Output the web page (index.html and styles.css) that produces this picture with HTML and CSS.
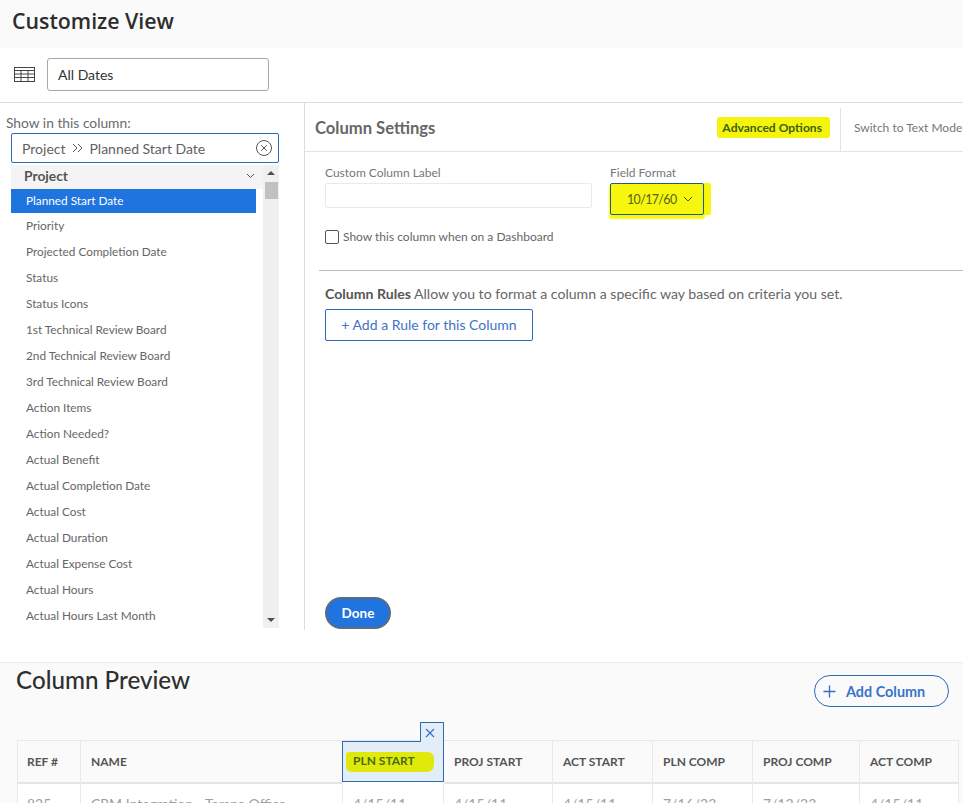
FILE: index.html
```html
<!DOCTYPE html>
<html lang="en">
<head>
<meta charset="utf-8">
<title>Customize View</title>
<link rel="stylesheet" href="styles.css">
</head>
<body>
<header class="page-head"><h1>Customize View</h1></header>
<section class="toolbar">
  <svg class="grid-icon" width="21" height="15" viewBox="0 0 21 15" fill="none" stroke="#444" stroke-width="1"><rect x="0.5" y="0.5" width="20" height="14"/><path d="M0.5 3.5h20M0.5 7h20M0.5 10.500h20M7 3.500v11M14 3.500v11"/></svg>
  <div class="view-name">All Dates</div>
</section>
<main class="editor">
  <aside class="picker">
    <div class="picker-label">Show in this column:</div>
    <div class="picker-input">
      <span>Project</span>
      <svg class="crumb" width="12" height="10" viewBox="0 0 12 10" fill="none" stroke="#555" stroke-width="1"><path d="M1 1l4 4-4 4M6 1l4 4-4 4"/></svg>
      <span>Planned Start Date</span>
      <svg class="clear" width="16" height="16" viewBox="0 0 16 16" fill="none" stroke="#555" stroke-width="1"><circle cx="8" cy="8" r="7.5"/><path d="M5.200 5.200l5.600 5.600M10.800 5.200l-5.600 5.600"/></svg>
    </div>
    <div class="picker-list">
      <div class="list-col">
        <div class="group">Project<svg width="9" height="6" viewBox="0 0 9 6" fill="none" stroke="#555" stroke-width="1"><path d="M1 1l3.500 3.500L8 1"/></svg></div>
        <div class="item selected">Planned Start Date</div>
        <div class="item">Priority</div>
        <div class="item">Projected Completion Date</div>
        <div class="item">Status</div>
        <div class="item">Status Icons</div>
        <div class="item">1st Technical Review Board</div>
        <div class="item">2nd Technical Review Board</div>
        <div class="item">3rd Technical Review Board</div>
        <div class="item">Action Items</div>
        <div class="item">Action Needed?</div>
        <div class="item">Actual Benefit</div>
        <div class="item">Actual Completion Date</div>
        <div class="item">Actual Cost</div>
        <div class="item">Actual Duration</div>
        <div class="item">Actual Expense Cost</div>
        <div class="item">Actual Hours</div>
        <div class="item">Actual Hours Last Month</div>
      </div>
      <div class="scrollbar">
        <i class="arrow up"></i>
        <i class="thumb"></i>
        <i class="arrow down"></i>
      </div>
    </div>
  </aside>
  <section class="settings">
    <div class="settings-head">
      <h2>Column Settings</h2>
      <div class="advanced"><span class="marker">Advanced Options</span></div>
      <div class="switch">Switch to Text Mode</div>
    </div>
    <div class="form-row">
      <div class="field">
        <label class="field-label">Custom Column Label</label>
        <div class="text-input"></div>
      </div>
      <div class="field">
        <label class="field-label">Field Format</label>
        <div class="format-select">10/17/60<svg width="10" height="6" viewBox="0 0 10 6" fill="none" stroke="#4d5a10" stroke-width="1"><path d="M1 1l4 4 4-4"/></svg></div>
      </div>
    </div>
    <div class="check-row"><span class="checkbox"></span><span>Show this column when on a Dashboard</span></div>
    <hr class="rule">
    <p class="rules-text"><b>Column Rules</b> Allow you to format a column a specific way based on criteria you set.</p>
    <div class="add-rule">+ Add a Rule for this Column</div>
    <div class="done">Done</div>
  </section>
</main>
<section class="preview">
  <div class="preview-head">
    <h2>Column Preview</h2>
    <div class="add-col"><svg width="13" height="13" viewBox="0 0 13 13" fill="none" stroke="#2f6fd0" stroke-width="1.300"><path d="M6.500 0.500v12M0.500 6.500h12"/></svg><span>Add Column</span></div>
  </div>
  <div class="table">
    <div class="cell head">REF #</div>
    <div class="cell head">NAME</div>
    <div class="cell head active">
      <span class="remove"><svg width="10" height="10" viewBox="0 0 10 10" fill="none" stroke="#2f6fd0" stroke-width="1.100"><path d="M1 1l8 8M9 1l-8 8"/></svg></span>
      <span class="marker-col">PLN START</span>
    </div>
    <div class="cell head">PROJ START</div>
    <div class="cell head">ACT START</div>
    <div class="cell head">PLN COMP</div>
    <div class="cell head">PROJ COMP</div>
    <div class="cell head">ACT COMP</div>
    <div class="cell">825</div>
    <div class="cell">CRM Integration - Tampa Office</div>
    <div class="cell">4/15/11</div>
    <div class="cell">4/15/11</div>
    <div class="cell">4/15/11</div>
    <div class="cell">7/16/23</div>
    <div class="cell">7/12/23</div>
    <div class="cell">4/15/11</div>
  </div>
</section>
</body>
</html>
```
FILE: styles.css
```css
* { box-sizing: border-box; }
html, body { margin: 0; height: 803px; overflow: hidden; }
body { background: #fff; color: #4a4a4a; font-family: "Lato", "Liberation Sans", sans-serif; font-size: 12px; width: 963px; }

.page-head { height: 48px; background: #fafafa; padding: 6px 0 0 12px; }
.page-head h1 { margin: 0; font: 600 21.3px/30px "Open Sans", sans-serif; color: #2d2d2d; }

.toolbar { height: 55px; display: flex; align-items: flex-start; padding: 10px 0 0 14px; border-bottom: 1px solid #ddd; }
.grid-icon { margin: 9px 12px 0 0; }
.view-name { width: 222px; height: 33px; border: 1px solid #a8a8a8; border-radius: 3px; padding: 0 10px; font-size: 14px; line-height: 32px; color: #333; }

.editor { display: flex; height: 527px; }
.picker { width: 305px; border-right: 1px solid #ddd; padding: 12px 25px 0 0; flex: none; }
.picker-label { font-size: 13.8px; line-height: 15px; color: #6b6b6b; padding-left: 6px; margin-bottom: 3px; }
.picker-input { margin: 0 0 2px 11px; height: 30px; border: 1px solid #2a6cb5; border-radius: 2px; display: flex; align-items: center; padding: 0 6px 0 10px; font-size: 14px; color: #5f5f5f; }
.crumb { margin: 0 5px 0 7px; }
.clear { margin-left: auto; }
.picker-list { display: flex; margin-left: 11px; height: 463px; overflow: hidden; }
.list-col { width: 245px; }
.group { height: 24px; background: #f4f4f4; display: flex; align-items: center; justify-content: space-between; padding: 0 8px 3px 13px; width: 252px; font-size: 13.8px; font-weight: 700; color: #555; }
.item { height: 26px; padding-left: 15px; line-height: 26px; font-size: 11.8px; color: #666; white-space: nowrap; }
.item.selected { height: 24px; line-height: 24px; background: #1f74e0; color: #fff; }
.scrollbar { width: 16px; margin-left: 7px; background: #f0f0f0; position: relative; flex: none; }
.thumb { position: absolute; top: 17px; left: 2px; width: 13px; height: 17px; background: #c1c1c1; }
.arrow { position: absolute; left: 4px; width: 0; height: 0; border-left: 4px solid transparent; border-right: 4px solid transparent; }
.arrow.up { top: 6px; border-bottom: 4px solid #505050; }
.arrow.down { bottom: 6px; border-top: 4px solid #505050; }

.settings { flex: 1; min-width: 0; position: relative; overflow: hidden; }
.settings-head { height: 49px; display: flex; align-items: center; border-bottom: 1px solid #e3e3e3; padding-left: 10px; }
.settings-head h2 { margin: 2px 0 0; font-size: 16.6px; font-weight: 700; color: #666; }
.advanced { margin-left: auto; display: flex; }
.marker { background: #f4f40e; color: #3f5f0a; font-size: 12.1px; font-weight: 700; padding: 3px 8px 3px 5px; border-radius: 3px; }
.switch { margin: 5px 0 0 10px; height: 44px; border-left: 1px solid #e3e3e3; padding: 12px 0 0 13px; font-size: 12px; color: #777; white-space: nowrap; width: 123px; flex: none; }

.form-row { display: flex; gap: 18px; padding: 13px 0 0 20px; }
.field-label { display: block; font-size: 12px; line-height: 16px; color: #777; margin-bottom: 2px; }
.text-input { width: 267px; height: 25px; border: 1px solid #eaeaea; border-radius: 2px; }
.format-select { width: 94px; height: 32px; background: #f6f60e; border: 1px solid #1e5a86; border-radius: 2px; box-shadow: 0 3px 2px 1px #f6f60e, 7px 0 0 #f6f60e; display: flex; align-items: center; padding-left: 16px; gap: 6px; font-size: 12.4px; letter-spacing: -0.6px; color: #55650f; }
.check-row { display: flex; align-items: center; gap: 4px; padding: 14px 0 0 20px; font-size: 12px; color: #666; }
.checkbox { width: 14px; height: 14px; border: 1px solid #555; border-radius: 2px; background: #fff; }
.rule { margin: 26px 0 0 14px; border: 0; border-top: 1px solid #bdbdbd; }
.rules-text { margin: 15px 0 0 20px; font-size: 14.1px; line-height: 16px; color: #666; white-space: nowrap; }
.rules-text b { color: #555; }
.add-rule { margin: 7px 0 0 20px; width: 208px; height: 32px; border: 1px solid #2a6cb5; border-radius: 2px; text-align: center; line-height: 30px; font-size: 14px; color: #3f73c4; }
.done { position: absolute; left: 20px; top: 494px; width: 66px; height: 32px; background: #1f74e0; border: 2px solid #5f6b7d; border-radius: 16px; color: #fff; font-size: 13.5px; font-weight: 700; text-align: center; line-height: 28px; }

.preview { margin-top: 32px; height: 141px; background: #fafafa; border-top: 1px solid #ececec; overflow: hidden; }
.preview-head { display: flex; justify-content: space-between; height: 77px; padding: 2px 14px 0 16px; }
.preview-head h2 { margin: 0; font-size: 24.2px; font-weight: 500; line-height: 30px; color: #2f2f2f; }
.add-col { margin-top: 10px; width: 135px; height: 32px; border: 1px solid #2a6cb5; border-radius: 16px; display: flex; align-items: center; padding-left: 8px; gap: 10px; color: #3a72cc; font-size: 14.4px; font-weight: 700; }

.table { display: grid; grid-template-columns: 64px 262px 101px 109px 100px 100px 107px 99px; grid-template-rows: 43px 40px; margin-left: 17px; width: 942px; background: #fff; border-top: 1px solid #e8e8e8; }
.cell { padding: 11px 0 0 10px; border-right: 1px solid #e8e8e8; font-size: 14px; color: #a0a0a0; white-space: nowrap; }
.cell:first-child, .cell:nth-child(9) { border-left: 1px solid #e8e8e8; padding-left: 9px; }
.head { display: flex; align-items: center; padding: 0 0 0 10px; background: #fafafa; border-bottom: 2px solid #e5e5e5; font-size: 12px; font-weight: 700; color: #555; position: relative; }
.active { background: #e3edf8; border: 1px solid #2a6cb5; padding-left: 3px; align-self: start; height: 41px; margin-left: -1px; }
.remove { position: absolute; right: -1px; top: -20px; width: 24px; height: 20px; background: #e3edf8; border: 1px solid #2a6cb5; border-bottom: 0; display: flex; align-items: center; justify-content: center; padding-right: 5px; }
.marker-col { width: 88px; height: 20px; line-height: 18px; background: #dfea0c; color: #4a6b10; border-radius: 3px 6px 7px 5px; padding-left: 7px; margin-top: 1px; }
```
